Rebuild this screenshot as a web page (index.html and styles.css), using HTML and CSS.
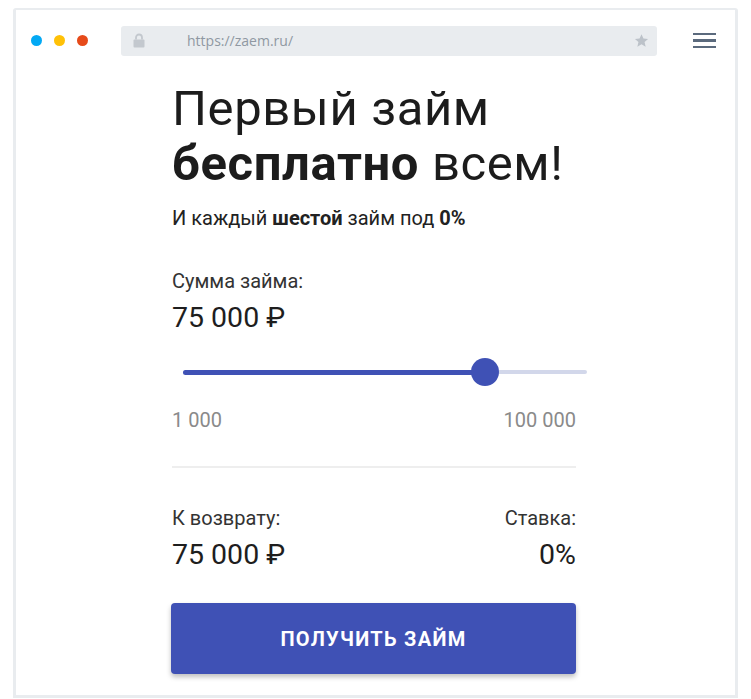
FILE: index.html
```html
<!DOCTYPE html>
<html lang="ru">
<head>
<meta charset="utf-8">
<title>Заем</title>
<link rel="stylesheet" href="styles.css">
</head>
<body>
<div class="frame">
  <header class="topbar">
    <div class="dots">
      <span class="dot dot-blue"></span>
      <span class="dot dot-yellow"></span>
      <span class="dot dot-red"></span>
    </div>
    <div class="urlbar">
      <svg class="lock" width="12" height="15" viewBox="0 0 12 15">
        <path d="M3 6.5V4.5a3 3 0 0 1 6 0v2" fill="none" stroke="#c3c8ce" stroke-width="1.8"/>
        <rect x="0.5" y="6.5" width="11" height="8" rx="1" fill="#c3c8ce"/>
      </svg>
      <span class="url">https://zaem.ru/</span>
      <svg class="star" width="15" height="15" viewBox="0 0 24 24">
        <path d="M12 1.8l3.1 6.9 7.4.7-5.6 5 1.7 7.4L12 17.9l-6.6 3.9 1.7-7.4-5.6-5 7.4-.7z" fill="#bcc2c9"/>
      </svg>
    </div>
    <div class="burger">
      <span></span><span></span><span></span>
    </div>
  </header>

  <main class="content">
    <h1 class="title">Первый займ<br><strong>бесплатно</strong> всем!</h1>
    <p class="subtitle">И каждый <strong>шестой</strong> займ под <strong>0%</strong></p>

    <div class="label">Сумма займа:</div>
    <div class="amount">75 000 ₽</div>

    <div class="slider">
      <div class="track">
        <div class="track-fill" style="width: 75%"></div>
        <div class="thumb" style="left: 75%"></div>
      </div>
    </div>

    <div class="range">
      <span>1 000</span>
      <span>100 000</span>
    </div>

    <div class="divider"></div>

    <div class="summary">
      <div class="col">
        <div class="label">К возврату:</div>
        <div class="amount">75 000 ₽</div>
      </div>
      <div class="col col-right">
        <div class="label">Ставка:</div>
        <div class="amount">0%</div>
      </div>
    </div>

    <button class="cta">ПОЛУЧИТЬ ЗАЙМ</button>
  </main>
</div>
</body>
</html>
```

FILE: styles.css
```css
* { box-sizing: border-box; }

html, body {
  margin: 0;
  padding: 0;
  background: #ffffff;
}

body {
  font-family: Roboto, "Noto Sans", Arial, sans-serif;
  color: #212121;
}

.frame {
  margin: 8px 0 0 13px;
  width: 725px;
  height: 690px;
  border: 3px solid #e9ecef;
  border-top-width: 2px;
  border-radius: 3px 3px 0 0;
  background: #fff;
}

.topbar {
  display: flex;
  align-items: center;
  height: 60px;
  padding: 0 19px 0 15px;
  padding-top: 1px;
}

.dots {
  display: flex;
  gap: 12px;
  width: 90px;
}

.dot {
  width: 11px;
  height: 11px;
  border-radius: 50%;
  display: block;
}
.dot-blue { background: #03a9f4; }
.dot-yellow { background: #ffc107; }
.dot-red { background: #e64a19; }

.urlbar {
  display: flex;
  align-items: center;
  width: 536px;
  height: 30px;
  background: #e9ecef;
  border-radius: 3px;
  padding: 0 8px 0 12px;
}

.lock { flex: none; }

.url {
  margin-left: 42px;
  font-family: "Open Sans", "Liberation Sans", sans-serif;
  font-size: 14px;
  color: #8f98a2;
  flex: 1;
}

.star { flex: none; }

.burger {
  margin-left: auto;
  display: flex;
  flex-direction: column;
  gap: 4px;
  width: 23px;
}
.burger span {
  display: block;
  height: 2.3px;
  background: #5b6a7d;
}

.content {
  width: 404px;
  margin: 11px 0 0 156px;
}

.title {
  margin: 0;
  font-size: 49px;
  line-height: 55px;
  font-weight: 400;
  letter-spacing: 0.6px;
  color: #1c1c1c;
}
.title strong { font-weight: 700; }

.subtitle {
  margin: 15px 0 0;
  font-size: 20px;
  line-height: 24px;
  color: #222;
}
.subtitle strong { font-weight: 700; }

.label {
  font-size: 20px;
  line-height: 24px;
  color: #333;
}

.content > .label { margin-top: 39px; }

.amount {
  margin-top: 7px;
  font-size: 28.5px;
  line-height: 36px;
  color: #1e1e1e;
}

.slider {
  margin: 22px -11px 0 11px;
  height: 28px;
  display: flex;
  align-items: center;
}

.track {
  position: relative;
  width: 100%;
  height: 4px;
  border-radius: 2px;
  background: #d2d7ea;
}

.track-fill {
  height: 5px;
  margin-top: -0.5px;
  border-radius: 3px;
  background: #3f51b5;
}

.thumb {
  position: absolute;
  top: 50%;
  width: 28px;
  height: 28px;
  margin: -14px 0 0 -15px;
  border-radius: 50%;
  background: #3f51b5;
}

.range {
  display: flex;
  justify-content: space-between;
  margin-top: 22px;
  font-size: 20px;
  line-height: 24px;
  color: #8a8a8a;
}

.divider {
  margin-top: 34px;
  height: 2px;
  background: #eeeeee;
}

.summary {
  display: flex;
  justify-content: space-between;
  margin-top: 38px;
}

.col-right { text-align: right; }

.summary .amount { margin-top: 7px; }

.cta {
  display: block;
  width: 405px;
  margin: 30px 0 0 -1px;
  height: 71px;
  border: none;
  border-radius: 4px;
  background: #3f51b5;
  color: #fff;
  font-family: Roboto, "Noto Sans", Arial, sans-serif;
  font-size: 20px;
  font-weight: 700;
  letter-spacing: 1.3px;
  box-shadow: 0 3px 5px rgba(0, 0, 0, 0.25);
}
```
